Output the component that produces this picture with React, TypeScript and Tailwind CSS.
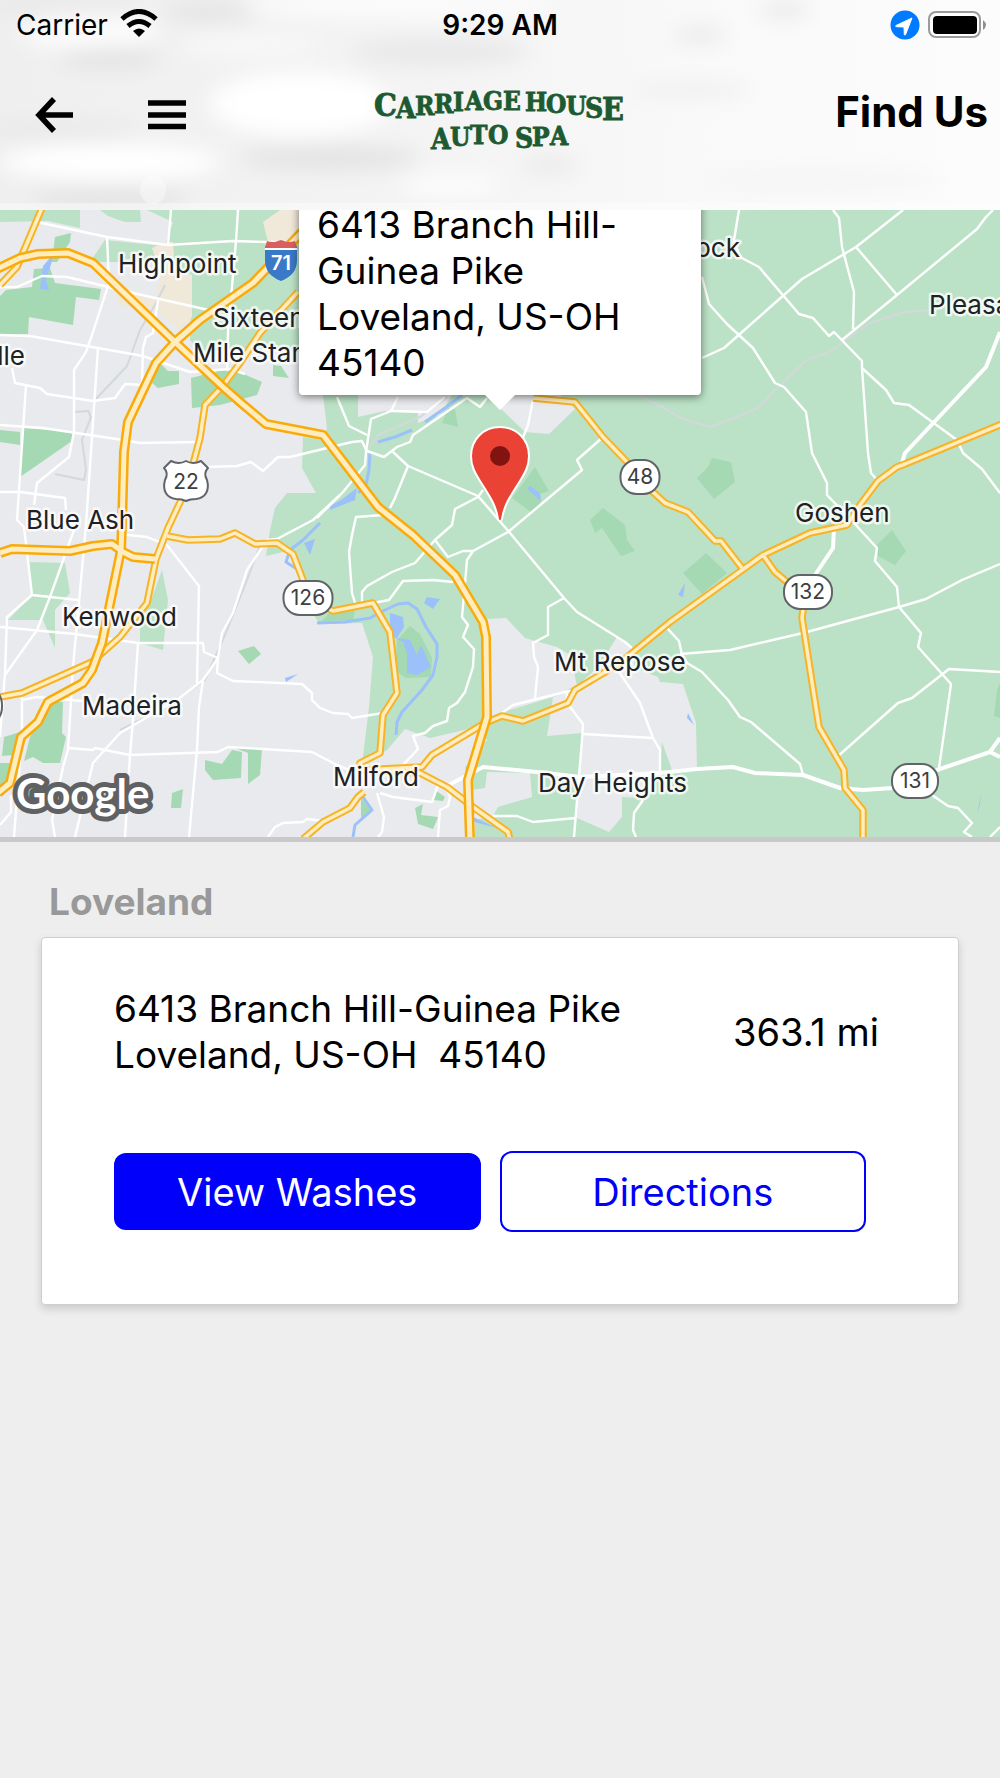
import React, { useState } from 'react'

type Label = { text: string; x: number; y: number; anchor?: 'start' | 'end' }
type Shield = { text: string; x: number; y: number; w: number }
type LogoLetter = { ch: string; x: number; y: number; size: number }

type Location = {
  id: string
  city: string
  street: string
  cityLine: string
  distance: string
}

const LOCATIONS: Location[] = [
  {
    id: 'loveland',
    city: 'Loveland',
    street: '6413 Branch Hill-Guinea Pike',
    cityLine: 'Loveland, US-OH\u00a0 45140',
    distance: '363.1 mi',
  },
]

// Everything on the map shares one coordinate space, see the viewBox in MapDrawing
const COUNTRY = [
  '323,395 327,428 323,440 303,437 302,468 316,493 287,493 275,508 270,530 266,556 292,550 305,580 315,617 320,624 362,623 373,657 369,707 362,765 387,750 405,729 430,738 477,727 487,740 465,767 470,790 485,788 487,772 530,773 532,797 498,807 493,816 475,820 475,837 1000,837 1000,210 330,210',
  '0,210 80,210 80,228 48,221 0,222',
  '100,210 140,210 141,222 125,222 108,216',
  '147,210 300,210 300,352 250,348 200,352 190,340 192,275 175,270 165,262 90,262 105,240 165,246 173,222',
  '29,562 65,563 70,593 55,610 55,648 43,620 8,620 32,595',
  '162,570 168,600 163,650 140,643 140,620 150,603',
]

const SUBURB = [
  '358,395 358,417 385,411 418,412 418,423 440,415 452,395',
  '500,408 525,432 549,434 575,409 560,395 500,395',
  '487,619 506,618 525,638 557,647 570,655 577,685 553,697 503,712 488,722',
  '610,648 617,637 632,648 635,668 658,677 660,682 683,684 696,723 697,768 672,770 662,742 660,772 643,798 622,797 622,817 609,832 577,818 578,780 582,733 547,736 553,697 573,690 600,665',
]

const BEIGE = [
  '263,222 280,210 300,210 300,235 290,243 268,242',
  '152,248 165,242 173,242 175,272 192,275 192,317 180,330 153,308 117,305 118,293 133,292 157,297 160,272',
]

const PARKS = [
  '6,290 32,287 34,269 50,268 55,283 101,289 99,300 76,297 73,325 29,317 28,334 0,335 0,296',
  '55,237 71,233 70,242 57,262 52,262',
  '160,363 168,371 179,371 179,384 158,388 152,383',
  '191,378 230,368 262,382 257,395 220,405 192,408',
  '273,365 281,366 289,378 273,376',
  '0,430 20,432 20,445 0,442',
  '23,428 73,432 72,441 20,477',
  '50,702 63,702 62,733 66,737 60,763 43,763 33,757 24,761 30,737',
  '4,737 20,732 13,755 2,756',
  '0,763 10,763 8,785 0,795',
  '24,782 44,782 48,806 22,806',
  '238,651 254,646 261,654 249,664',
  '205,760 222,764 232,750 242,752 241,778 213,780 205,770',
  '235,748 262,749 260,775 248,784 248,753',
  '172,793 183,789 181,808 171,808',
  '712,458 731,462 735,482 714,499 697,478 708,467',
  '448,408 455,409 458,427 442,423',
  '535,467 549,491 540,494 541,502 532,513 512,498',
  '603,508 625,525 627,540 635,551 621,556 602,528 595,533 590,520',
  '706,553 727,573 702,594 683,573',
  '892,530 906,551 895,565 878,556 877,545',
  '1000,683 1000,718 994,716 997,690',
  '410,626 420,634 432,658 431,677 406,678 395,670 397,640',
  '435,790 445,797 443,801 433,800',
  '415,808 423,804 421,815 438,817 433,829 418,824',
  '330,612 355,611 353,620 322,621',
  '361,797 371,810 361,818',
]

const LAKES = [
  '50,258 43,266 40,289 49,290 46,280 53,258',
  '285,678 298,674 286,682',
  '390,613 403,617 404,627 397,638 410,640 417,655 421,645 431,667 417,675 407,673 407,653 403,642 397,639 390,633',
  '427,597 440,599 433,609 424,603',
  '357,488 355,500 330,510 330,506 341,500',
  '530,486 540,493 541,501 527,489',
  '304,543 315,539 310,555',
  '685,583 683,597 678,595',
  '688,713 694,725 687,718',
  '981,794 980,804 977,815',
  '473,817 497,828 474,822',
]

const RIVERS = [
  '317,623 345,622 370,618 385,610 398,604 408,603 417,609 426,627 437,644 437,657 433,675 422,690 402,712 397,722 396,735',
  '462,395 445,408 425,422',
  '378,442 395,437 412,430',
  '370,452 369,470 366,485 358,493',
  '320,523 303,540 290,550 286,562 303,573',
  '363,797 372,810 355,825 353,837',
]

const RAILS = [
  '640,395 660,406 683,419 711,427 758,408 780,385 808,359 828,353 870,323 905,312 930,310',
  '260,545 247,580 225,635 205,680 165,708 120,730',
  '165,285 155,305 140,330 127,366 95,400',
  '75,412 88,411 91,417 82,440 86,470 84,480 55,474',
  '366,452 378,435 420,417 447,397',
]

const STREETS = [
  '37,222 107,237 168,245 233,241 267,242 300,242',
  '171,210 168,245',
  '238,210 236,241 228,332 227,371',
  '107,237 109,283 92,335 86,352 74,370 74,432 69,457 37,483 34,505',
  '0,287 17,287 42,276 67,277 133,293 213,311',
  '0,335 30,336 143,356 190,372 230,369 245,374',
  '98,348 86,525 79,602 73,667 68,750 63,767 52,820 55,837',
  '12,368 15,383 40,388 47,394 93,401 115,398 125,384 142,385 143,348 146,337 153,333 158,300',
  '26,385 17,520 24,527 32,595 78,600',
  '0,425 43,428 123,440 140,443 197,442',
  '0,492 20,492 65,498 66,510',
  '207,467 237,466 251,462 263,471 278,457 290,457 352,442 362,441 367,452',
  '32,595 7,617 5,673 0,737',
  '75,527 50,597 37,630 5,675',
  '0,627 75,634 138,643 203,643 204,652 218,658 217,673 233,681 302,684 312,693 312,700 320,708 333,713 348,714 352,718 383,713',
  '138,643 133,720 130,755 125,837',
  '120,534 147,537 167,545 199,586 197,683',
  '340,495 313,520 277,539 267,540 247,570 233,613 222,633 218,658 203,680 177,700 120,733 93,763 75,837',
  '203,680 199,707 197,750 189,837',
  '68,748 93,750 95,748 130,755 218,752 228,747 312,752 333,763 360,775',
  '22,695 22,730',
  '22,700 37,697 82,701',
  '20,760 14,837',
  '11,795 11,812 0,825',
  '268,837 275,827 283,823 303,822 307,819 323,821',
  '337,397 349,426 367,435',
  '398,397 391,411 371,419 366,452 365,465 343,492 317,518',
  '391,411 427,412 445,397',
  '367,451 384,457 397,447 410,442 413,435 467,398 480,407 487,398',
  '393,452 408,466 478,496 510,533 564,598 577,612 625,642 632,648',
  '408,466 395,498 390,508',
  '383,515 356,517 352,535 349,552 352,593 356,606',
  '483,490 478,497 455,509 452,525 435,540 415,563 392,572 367,586 362,592 362,605',
  '435,540 448,557 463,551 473,551 508,532 582,470 577,460 603,437',
  '473,551 467,560 462,617 468,625 463,637 474,649 473,667 465,692 457,703 449,708 447,721 433,726 425,733 413,736 418,749 403,765',
  '373,603 389,600 403,581 433,580 453,582',
  '533,400 528,425 522,440',
  '564,598 548,607 548,635 533,643 534,657 538,667 535,698',
  '502,713 513,705 565,692 575,690',
  '567,692 567,703 583,724 582,740 574,837',
  '583,734 653,738',
  '613,663 640,703 653,738 660,750 660,772',
  '493,816 517,816 533,822 576,818',
  '643,800 634,813 633,830 636,837',
  '380,793 393,797 432,802 438,785',
  '377,793 384,817 382,832 378,837',
  '447,788 450,797 448,806 440,810 438,837',
  '739,210 734,240 740,257 759,267 799,314 813,318 829,336 834,332 862,361 862,368 886,390 894,403 909,405 957,440 963,453 982,469 1000,493',
  '862,368 868,453 871,473 878,481',
  '702,277 709,304 727,324 753,348 775,383 784,387 806,412 812,453 827,483 827,495 853,522 877,548 875,561 897,587 899,607 921,633 918,647 951,684 939,768',
  '702,358 724,348 802,279 856,247 903,210',
  '833,210 839,218 842,247 854,292 853,329',
  '856,247 897,295',
  '842,340 897,295 977,229 986,217 993,210',
  '1000,564 962,580 926,599 899,607 803,633 730,650 680,654',
  '666,627 679,641 682,655 687,663 702,672 728,700 740,717 751,722 800,764 803,775',
  '837,757 898,703 912,698 949,669 1000,672',
  '932,795 948,806 958,808 972,823 964,832 972,837',
  '1000,827 990,837',
]

const WIDE_STREETS = [
  '1000,332 986,367 905,453 902,463',
  '834,528 833,548 815,575',
  '445,787 483,767 537,772 580,777 660,773 697,769 733,767 755,773 803,775 840,788 863,790 893,788 937,770 990,752 1000,738',
  '990,752 1000,757',
]

const HIGHWAYS = [
  '298,292 260,333 240,363 222,387 205,405 200,438 192,468 182,498 168,528 156,559 147,603 120,637 92,662 22,693 0,697',
  '42,208 22,255 17,267 0,285',
  '167,536 188,540 220,539 235,533 255,544 277,543 293,554 303,580 308,598 333,611 373,603 390,632 397,693 383,715 380,753 360,763 362,770 422,767 432,755 485,723 502,716 523,721 568,703 575,690 620,663 670,622 763,555 810,533 847,525 860,505 878,481 897,467 905,464 1002,424',
  '362,770 420,773 447,787 473,807 508,832 510,840',
  '364,792 358,797 350,808 323,822 303,839',
  '533,398 575,402 603,437 627,462 653,492 665,503 688,512 715,541 721,541 742,568',
  '763,555 775,572 793,587 803,610 802,618 819,727 844,770 845,788 863,810 863,840',
]

const FREEWAYS = [
  '0,553 12,549 70,551 93,546 112,544 123,552 133,557 155,559',
  '-3,269 20,258 38,254 68,253 93,263 175,342 223,387 240,402 266,424 323,435 378,507 413,535 455,575 483,622 486,637 487,717 468,780 470,840',
  '302,232 253,283 200,320 175,342 156,363 128,422 124,452 122,525 121,550 102,643 92,670 83,683 48,702 38,722 21,737 10,783 -2,793',
]

const LABELS: Label[] = [
  { text: 'Highpoint', x: 118, y: 273 },
  { text: 'Sixteen', x: 213, y: 327 },
  { text: 'Mile Stand', x: 193, y: 362 },
  { text: 'lle', x: 25, y: 365, anchor: 'end' },
  { text: 'Blue Ash', x: 26, y: 529 },
  { text: 'Kenwood', x: 62, y: 626 },
  { text: 'Madeira', x: 82, y: 715 },
  { text: 'Milford', x: 333, y: 786 },
  { text: 'Mt Repose', x: 554, y: 671 },
  { text: 'Day Heights', x: 538, y: 792 },
  { text: 'Goshen', x: 795, y: 522 },
  { text: 'Pleasant', x: 929, y: 314 },
  { text: 'ock', x: 740, y: 257, anchor: 'end' },
]

const SHIELDS: Shield[] = [
  { text: '126', x: 308, y: 598, w: 49 },
  { text: '48', x: 640, y: 477, w: 39 },
  { text: '132', x: 808, y: 592, w: 48 },
  { text: '131', x: 915, y: 781, w: 46 },
  { text: '', x: -10, y: 706, w: 24 },
]

const LOGO_TOP: LogoLetter[] = [
  { ch: 'C', x: 374, y: 122, size: 32 },
  { ch: 'A', x: 396, y: 124, size: 28 },
  { ch: 'R', x: 415, y: 121, size: 26 },
  { ch: 'R', x: 434, y: 119, size: 26 },
  { ch: 'I', x: 453, y: 117, size: 26 },
  { ch: 'A', x: 465, y: 116, size: 26 },
  { ch: 'G', x: 483, y: 116, size: 26 },
  { ch: 'E', x: 503, y: 116, size: 26 },
  { ch: 'H', x: 525, y: 117, size: 26 },
  { ch: 'O', x: 546, y: 119, size: 26 },
  { ch: 'U', x: 566, y: 121, size: 26 },
  { ch: 'S', x: 585, y: 124, size: 28 },
  { ch: 'E', x: 602, y: 126, size: 32 },
]

const LOGO_BOTTOM: LogoLetter[] = [
  { ch: 'A', x: 431, y: 155, size: 28 },
  { ch: 'U', x: 450, y: 152, size: 26 },
  { ch: 'T', x: 470, y: 150, size: 26 },
  { ch: 'O', x: 488, y: 150, size: 26 },
  { ch: 'S', x: 515, y: 154, size: 28 },
  { ch: 'P', x: 532, y: 152, size: 26 },
  { ch: 'A', x: 550, y: 151, size: 26 },
]

function Lines({ items, color, width }: { items: string[]; color: string; width: number }) {
  return (
    <g fill="none" stroke={color} strokeWidth={width} strokeLinejoin="round">
      {items.map((points) => <polyline key={points} points={points} />)}
    </g>
  )
}

function Areas({ items, color }: { items: string[]; color: string }) {
  return <g fill={color}>{items.map((points) => <polygon key={points} points={points} />)}</g>
}

function MapDrawing() {
  return (
    <svg className="block h-full w-full font-[Inter,sans-serif]" viewBox="0 210 1000 627" preserveAspectRatio="xMidYMid slice" role="img" aria-label="Map">
      <rect y="210" width="1000" height="627" fill="#e8eaed" />
      <Areas items={COUNTRY} color="#bbe2c6" />
      <Areas items={SUBURB} color="#e8eaed" />
      <Areas items={BEIGE} color="#f0e8d8" />
      <Areas items={PARKS} color="#a5d9b3" />
      <Areas items={LAKES} color="#9cc0f9" />
      <Lines items={RIVERS} color="#9cc0f9" width={3} />
      <Lines items={RAILS} color="#d3d8da" width={2} />
      <Lines items={STREETS} color="#ffffff" width={2.4} />
      <Lines items={WIDE_STREETS} color="#ffffff" width={4} />
      <Lines items={HIGHWAYS} color="#f6b426" width={7.5} />
      <Lines items={HIGHWAYS} color="#ffecbf" width={3.5} />
      <Lines items={FREEWAYS} color="#f9ab0c" width={10} />
      <Lines items={FREEWAYS} color="#ffecbf" width={5} />

      <g>
        <path d="M265 246c5 2 9 0 16-4 7 4 11 6 16 4l0 14c0 11-6 17-16 21-10-4-16-10-16-21z" fill="#3a78c8" />
        <path d="M265 248l2-7c5 2 9 1 14-1 5 2 9 3 14 1l2 7z" fill="#d95f5f" />
        <path d="M265 249h32" stroke="#ffffff" strokeWidth="2" />
        <text x="281" y="270" textAnchor="middle" fontSize="20" fontWeight="600" fill="#ffffff">71</text>
      </g>
      <path d="M171 461q8 4 15 0q7 4 15 0l7 7q-5 5-1 12c3 11-2 18-11 19q-6 0-10 2q-4-2-10-2c-9-1-14-8-11-19q4-7-1-12z" fill="#ffffff" stroke="#606468" strokeWidth="2" strokeLinejoin="round" />
      <text x="186" y="489" textAnchor="middle" fontSize="21" fill="#3c4043">22</text>
      {SHIELDS.map((s) => (
        <g key={s.x}>
          <rect x={s.x - s.w / 2} y={s.y - 17} width={s.w} height="34" rx="16" fill="#ffffff" stroke="#606468" strokeWidth="2" />
          <text x={s.x} y={s.y + 7} textAnchor="middle" fontSize="21" fill="#3c4043">{s.text}</text>
        </g>
      ))}

      <g fontSize="26" fill="#202124" stroke="#ffffff" strokeOpacity="0.75" strokeWidth="5" strokeLinejoin="round" paintOrder="stroke">
        {LABELS.map((l) => <text key={l.text} x={l.x} y={l.y} textAnchor={l.anchor ?? 'start'}>{l.text}</text>)}
      </g>
      <text x="16" y="809" fontSize="42" fontWeight="700" className="font-[Lato,sans-serif]" fill="#ffffff" stroke="#5f6163" strokeWidth="10" strokeLinejoin="round" paintOrder="stroke">Google</text>

      <path d="M500 427c-17 0-29 13-29 29c0 10 4 17 9 25c9 14 16 24 18 38c1 3 3 3 4 0c2-14 9-24 18-38c5-8 9-15 9-25c0-16-12-29-29-29z" fill="#ea4335" stroke="#ffffff" strokeWidth="2" />
      <circle cx="500" cy="456" r="10" fill="#811411" />
    </svg>
  )
}

function HeaderBackdrop() {
  return (
    <svg className="absolute inset-0 h-full w-full" viewBox="0 0 1000 210" preserveAspectRatio="none" aria-hidden="true">
      <defs>
        <linearGradient id="sky" x1="0" x2="1" y1="0" y2="0">
          <stop offset="0" stopColor="#efefef" />
          <stop offset="0.45" stopColor="#f4f4f4" />
          <stop offset="0.7" stopColor="#f9f9f9" />
          <stop offset="1" stopColor="#fcfcfc" />
        </linearGradient>
        <filter id="soft" filterUnits="userSpaceOnUse" x="-50" y="-50" width="1100" height="310">
          <feGaussianBlur stdDeviation="10" />
        </filter>
      </defs>
      <rect width="1000" height="210" fill="url(#sky)" />
      <g filter="url(#soft)">
        <ellipse cx="60" cy="5" rx="80" ry="12" fill="#e9e9e9" />
        <ellipse cx="210" cy="12" rx="50" ry="10" fill="#e4e4e4" />
        <ellipse cx="400" cy="5" rx="160" ry="12" fill="#fdfdfd" />
        <ellipse cx="90" cy="32" rx="70" ry="18" fill="#fcfcfc" />
        <ellipse cx="110" cy="58" rx="50" ry="10" fill="#e2e2e2" />
        <ellipse cx="440" cy="52" rx="90" ry="13" fill="#e8e8e8" />
        <ellipse cx="250" cy="45" rx="70" ry="12" fill="#f8f8f8" />
        <ellipse cx="300" cy="104" rx="90" ry="32" fill="#ffffff" />
        <ellipse cx="60" cy="130" rx="80" ry="8" fill="#e8e8e8" />
        <ellipse cx="330" cy="158" rx="90" ry="12" fill="#e3e3e3" />
        <ellipse cx="110" cy="162" rx="110" ry="18" fill="#ffffff" />
        <ellipse cx="110" cy="198" rx="80" ry="8" fill="#e0e0e0" />
        <ellipse cx="450" cy="185" rx="50" ry="12" fill="#fcfcfc" />
        <ellipse cx="550" cy="165" rx="30" ry="10" fill="#ebebeb" />
        <ellipse cx="700" cy="35" rx="26" ry="8" fill="#e9e9e9" />
        <ellipse cx="785" cy="10" rx="26" ry="8" fill="#e9e9e9" />
        <ellipse cx="690" cy="90" rx="60" ry="7" fill="#eeeeee" />
        <ellipse cx="820" cy="180" rx="120" ry="14" fill="#f6f6f6" />
      </g>
      <ellipse cx="153" cy="190" rx="13" ry="14" fill="#ffffff" fillOpacity="0.4" />
      <rect y="203" width="1000" height="7" fill="#ffffff" fillOpacity="0.4" />
    </svg>
  )
}

function StatusBar() {
  return (
    <div className="relative grid h-[50px] grid-cols-3 items-center px-4 text-[28px] leading-8">
      <div className="flex items-center gap-3">
        <span>Carrier</span>
        <svg className="mb-1" width="38" height="28" viewBox="0 0 38 28" aria-hidden="true">
          <path d="M2 10q17-15 34 0" fill="none" stroke="#000000" strokeWidth="5" />
          <path d="M8 17q11-9 22 0" fill="none" stroke="#000000" strokeWidth="5" />
          <path d="M13 22q6-5 12 0l-6 6z" fill="#000000" />
        </svg>
      </div>
      <time className="text-center font-semibold">9:29 AM</time>
      <div className="-mr-1 flex items-center justify-end gap-2">
        <svg width="30" height="30" viewBox="0 0 30 30" aria-hidden="true">
          <circle cx="15" cy="15" r="14.5" fill="#007aff" />
          <path d="M22 8L6 15.500q-1 1 0.500 1.200l7.500 0.300 0.300 7.500q0.400 1.300 1.300 0z" fill="#ffffff" stroke="#ffffff" strokeLinejoin="round" />
        </svg>
        <svg width="60" height="28" viewBox="0 0 60 28" aria-hidden="true">
          <rect x="1" y="1" width="51" height="25" rx="7" fill="#ffffff" stroke="#9b9b9b" strokeWidth="2" />
          <rect x="5" y="5" width="44" height="18" rx="4" fill="#000000" />
          <path d="M55 9q6 5 0 10z" fill="#8e8e8e" />
        </svg>
      </div>
    </div>
  )
}

function Logo() {
  return (
    <svg width="260" height="90" viewBox="370 76 260 90" role="img" aria-label="Carriage House Auto Spa">
      <g className="font-['DejaVu_Serif_Condensed','DejaVu_Serif',serif]" fontWeight="700" fill="#1d5a31" stroke="#1d5a31" strokeWidth="0.800">
        {[...LOGO_TOP, ...LOGO_BOTTOM].map((l) => (
          <text key={`${l.ch}-${l.x}`} x={l.x} y={l.y} fontSize={l.size}>{l.ch}</text>
        ))}
      </g>
    </svg>
  )
}

function Header() {
  return (
    <header className="relative h-[210px] overflow-hidden">
      <HeaderBackdrop />
      <StatusBar />
      <nav className="relative grid grid-cols-3 items-center pt-5">
        <div className="flex items-center gap-[74px] pl-[34px]">
          <button type="button" aria-label="Back">
            <svg width="40" height="38" viewBox="0 0 40 38" fill="none" stroke="#000000" strokeWidth="5.500">
              <path d="M20 3L5 19l15 16M5 19h34" />
            </svg>
          </button>
          <button type="button" aria-label="Menu">
            <svg width="38" height="30" viewBox="0 0 38 30" stroke="#000000" strokeWidth="5.500">
              <path d="M0 3h38M0 15h38M0 26.500h38" />
            </svg>
          </button>
        </div>
        <div className="flex justify-center">
          <Logo />
        </div>
        <h1 className="pr-3 pb-1.5 text-right text-[42px] leading-[50px] font-bold">Find Us</h1>
      </nav>
    </header>
  )
}

function LocationCard({ location }: { location: Location }) {
  return (
    <section aria-labelledby={location.id}>
      <h2 id={location.id} className="px-2 pb-3 text-[37px] leading-[46px] font-bold text-[#999999]">{location.city}</h2>
      <div className="rounded border border-[#cfcfcf] bg-white pt-12 pr-[79px] pb-[72px] pl-[72px] shadow-[0_4px_8px_rgba(0,0,0,0.15)]">
        <div className="flex items-center justify-between leading-[46px]">
          <address className="text-[37px] not-italic">
            <span className="block">{location.street}</span>
            <span className="block">{location.cityLine}</span>
          </address>
          <span className="text-[38px] whitespace-nowrap">{location.distance}</span>
        </div>
        <div className="mt-[73px] mr-[13px] grid grid-cols-2 items-center gap-[19px] text-[38px] leading-[46px]">
          <button type="button" className="h-[77px] rounded-xl bg-[#0000fb] text-white">View Washes</button>
          <button type="button" className="h-[81px] rounded-xl border-2 border-[#0000fb] bg-white text-[#0000fb]">Directions</button>
        </div>
      </div>
    </section>
  )
}

export default function App() {
  const [popupOpen, setPopupOpen] = useState(true)

  return (
    <div className="flex min-h-screen flex-col bg-[#eeeeee] font-[Inter,sans-serif] text-black">
      <Header />
      <div className="relative h-[632px] overflow-hidden border-b-5 border-[#c9c9c9]" onClick={() => setPopupOpen(true)}>
        <MapDrawing />
        {popupOpen ? (
          <div className="absolute bottom-[442px] left-1/2 w-[402px] -translate-x-1/2 rounded-sm bg-white px-[18px] pt-4 pb-[9px] text-[37px] leading-[46px] shadow-[0_2px_8px_rgba(0,0,0,0.5)]">
            <span className="block">6413 Branch Hill-</span>
            <span className="block">Guinea Pike</span>
            <span className="block">Loveland, US-OH</span>
            <span className="block">45140</span>
            <svg className="absolute top-full left-1/2 -translate-x-1/2" width="30" height="15" viewBox="0 0 30 15" aria-hidden="true">
              <path d="M0 0h30L15 15z" fill="#ffffff" />
            </svg>
          </div>
        ) : null}
      </div>
      <main className="px-[41px] pt-[37px]">
        {LOCATIONS.map((location) => <LocationCard key={location.id} location={location} />)}
      </main>
    </div>
  )
}
